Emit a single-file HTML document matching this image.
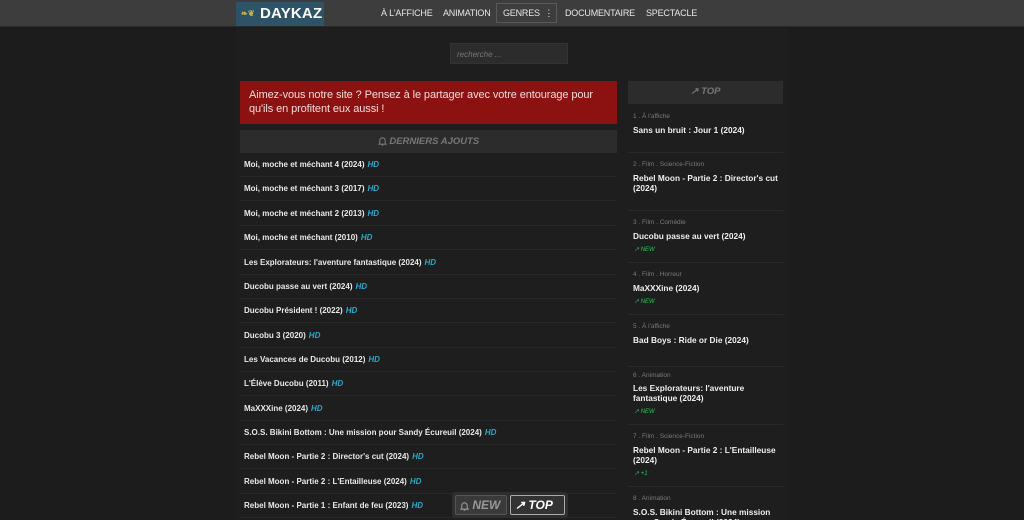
<!DOCTYPE html>
<html><head><meta charset="utf-8"><style>
*{margin:0;padding:0;box-sizing:border-box}
html,body{width:1024px;height:520px;overflow:hidden}
body{background:#1c1c1c;font-family:"Liberation Sans",Arial,sans-serif;position:relative;color:#fff}
.nav{position:absolute;left:0;top:0;width:1024px;height:27px;background:#3d3d3d;border-bottom:1px solid #2a2a2a}
.logo{position:absolute;left:236px;top:2px;width:88px;height:24px;background:#2e5266;color:#fff;font-weight:bold;font-size:15px;line-height:24px;padding-left:24px;letter-spacing:.2px}
.logo span{position:absolute;left:5px;top:0;font-size:8px;color:#c8b84a}
.nav a{position:absolute;top:8px;font-size:9px;color:#e6e6e6;letter-spacing:-.2px;white-space:nowrap}
.genres{position:absolute;left:496px;top:3px;width:61px;height:20px;border:1px solid #5a5a5a}
.wrap{position:absolute;left:236px;top:28px;width:552px;height:492px;background:#1e1e1e}
.search{position:absolute;left:450px;top:43px;width:118px;height:21px;background:#2c2c2c;border:1px solid #333;font-size:8px;color:#777;font-style:italic;padding:6px 6px}
.alert{position:absolute;left:240px;top:81px;width:377px;height:43px;background:#8c1212;color:#f3dada;font-size:11px;line-height:14px;padding:7px 9px;letter-spacing:-.1px}
.head{position:absolute;left:240px;top:130px;width:377px;height:23px;background:#2c2c2c;color:#777;font-size:9.5px;font-weight:bold;font-style:italic;text-align:center;line-height:23px}
.row{position:absolute;left:240px;width:377px;height:24px;border-bottom:1px solid #282828;font-size:8px;font-weight:bold;color:#e8e8e8;padding-left:4px;line-height:24px;white-space:nowrap}
.row i{color:#29a9c9;font-weight:bold;margin-left:3px}
.side{position:absolute;left:628px;top:81px;width:155px;height:23px;background:#2c2c2c;color:#777;font-size:9.5px;font-weight:bold;font-style:italic;text-align:center;line-height:22px}
.sep{position:absolute;left:628px;width:155px;height:1px;background:#2a2a2a}
.lb{position:absolute;left:633px;font-size:6.5px;color:#7a7a7a;white-space:nowrap}
.tt{position:absolute;left:633px;width:150px;font-size:8.3px;font-weight:bold;color:#eee;line-height:10px}
.nw{position:absolute;left:634px;font-size:6px;color:#2fc25b;font-style:italic}
.float{position:absolute;left:452px;top:492px;width:116px;height:26px;background:#2e2e2e;border-radius:3px}
.fb{position:absolute;top:3px;height:20px;font-size:12px;font-weight:bold;font-style:italic;line-height:19px;color:#bbb;border:1px solid #555;border-radius:2px;background:#3a3a3a;white-space:nowrap}
svg{vertical-align:middle}
</style></head><body>
<div class="nav">
<div class="logo"><span>❧❦</span>DAYKAZ</div>
<a style="left:381px">À L'AFFICHE</a>
<a style="left:443px">ANIMATION</a>
<div class="genres"></div>
<a style="left:503px">GENRES &nbsp;⋮</a>
<a style="left:565px">DOCUMENTAIRE</a>
<a style="left:646px">SPECTACLE</a>
</div>
<div class="wrap"></div>
<div class="search">recherche ...</div>
<div class="alert">Aimez-vous notre site ? Pensez à le partager avec votre entourage pour qu'ils en profitent eux aussi !</div>
<div class="head"><svg width="9" height="10" viewBox="0 0 10 11"><path d="M2 8V5a3 3 0 016 0v3l1 1H1zM4 10h2" fill="none" stroke="#777" stroke-width="1.2"/></svg> DERNIERS AJOUTS</div>
<div class="row" style="top:153px">Moi, moche et méchant 4 (2024)<i>HD</i></div>
<div class="row" style="top:177px">Moi, moche et méchant 3 (2017)<i>HD</i></div>
<div class="row" style="top:202px">Moi, moche et méchant 2 (2013)<i>HD</i></div>
<div class="row" style="top:226px">Moi, moche et méchant (2010)<i>HD</i></div>
<div class="row" style="top:251px">Les Explorateurs: l'aventure fantastique (2024)<i>HD</i></div>
<div class="row" style="top:275px">Ducobu passe au vert (2024)<i>HD</i></div>
<div class="row" style="top:299px">Ducobu Président ! (2022)<i>HD</i></div>
<div class="row" style="top:324px">Ducobu 3 (2020)<i>HD</i></div>
<div class="row" style="top:348px">Les Vacances de Ducobu (2012)<i>HD</i></div>
<div class="row" style="top:372px">L'Élève Ducobu (2011)<i>HD</i></div>
<div class="row" style="top:397px">MaXXXine (2024)<i>HD</i></div>
<div class="row" style="top:421px">S.O.S. Bikini Bottom : Une mission pour Sandy Écureuil (2024)<i>HD</i></div>
<div class="row" style="top:445px">Rebel Moon - Partie 2 : Director's cut (2024)<i>HD</i></div>
<div class="row" style="top:470px">Rebel Moon - Partie 2 : L'Entailleuse (2024)<i>HD</i></div>
<div class="row" style="top:494px">Rebel Moon - Partie 1 : Enfant de feu (2023)<i>HD</i></div>

<div class="side">↗ TOP</div>
<div class="lb" style="top:113px">1 . À l'affiche</div>
<div class="tt" style="top:125px">Sans un bruit : Jour 1 (2024)</div>
<div class="sep" style="top:152px"></div>
<div class="lb" style="top:161px">2 . Film . Science-Fiction</div>
<div class="tt" style="top:173px">Rebel Moon - Partie 2 : Director's cut (2024)</div>
<div class="sep" style="top:210px"></div>
<div class="lb" style="top:219px">3 . Film . Comédie</div>
<div class="tt" style="top:231px">Ducobu passe au vert (2024)</div>
<div class="nw" style="top:246px">↗ NEW</div>
<div class="sep" style="top:262px"></div>
<div class="lb" style="top:271px">4 . Film . Horreur</div>
<div class="tt" style="top:283px">MaXXXine (2024)</div>
<div class="nw" style="top:298px">↗ NEW</div>
<div class="sep" style="top:314px"></div>
<div class="lb" style="top:323px">5 . À l'affiche</div>
<div class="tt" style="top:335px">Bad Boys : Ride or Die (2024)</div>
<div class="sep" style="top:366px"></div>
<div class="lb" style="top:372px">6 . Animation</div>
<div class="tt" style="top:383px">Les Explorateurs: l'aventure fantastique (2024)</div>
<div class="nw" style="top:408px">↗ NEW</div>
<div class="sep" style="top:424px"></div>
<div class="lb" style="top:433px">7 . Film . Science-Fiction</div>
<div class="tt" style="top:445px">Rebel Moon - Partie 2 : L'Entailleuse (2024)</div>
<div class="nw" style="top:470px">↗ +1</div>
<div class="sep" style="top:486px"></div>
<div class="lb" style="top:495px">8 . Animation</div>
<div class="tt" style="top:507px">S.O.S. Bikini Bottom : Une mission pour Sandy Écureuil (2024)</div>

<div class="float">
<div class="fb" style="left:3px;width:52px;padding-left:4px;color:#999"><svg width="9" height="10" viewBox="0 0 10 11"><path d="M2 8V5a3 3 0 016 0v3l1 1H1zM4 10h2" fill="none" stroke="#999" stroke-width="1.2"/></svg> NEW</div>
<div class="fb" style="left:58px;width:55px;padding-left:4px;color:#fff;border-color:#aaa;background:#333">↗ TOP</div>
</div>
</body></html>
